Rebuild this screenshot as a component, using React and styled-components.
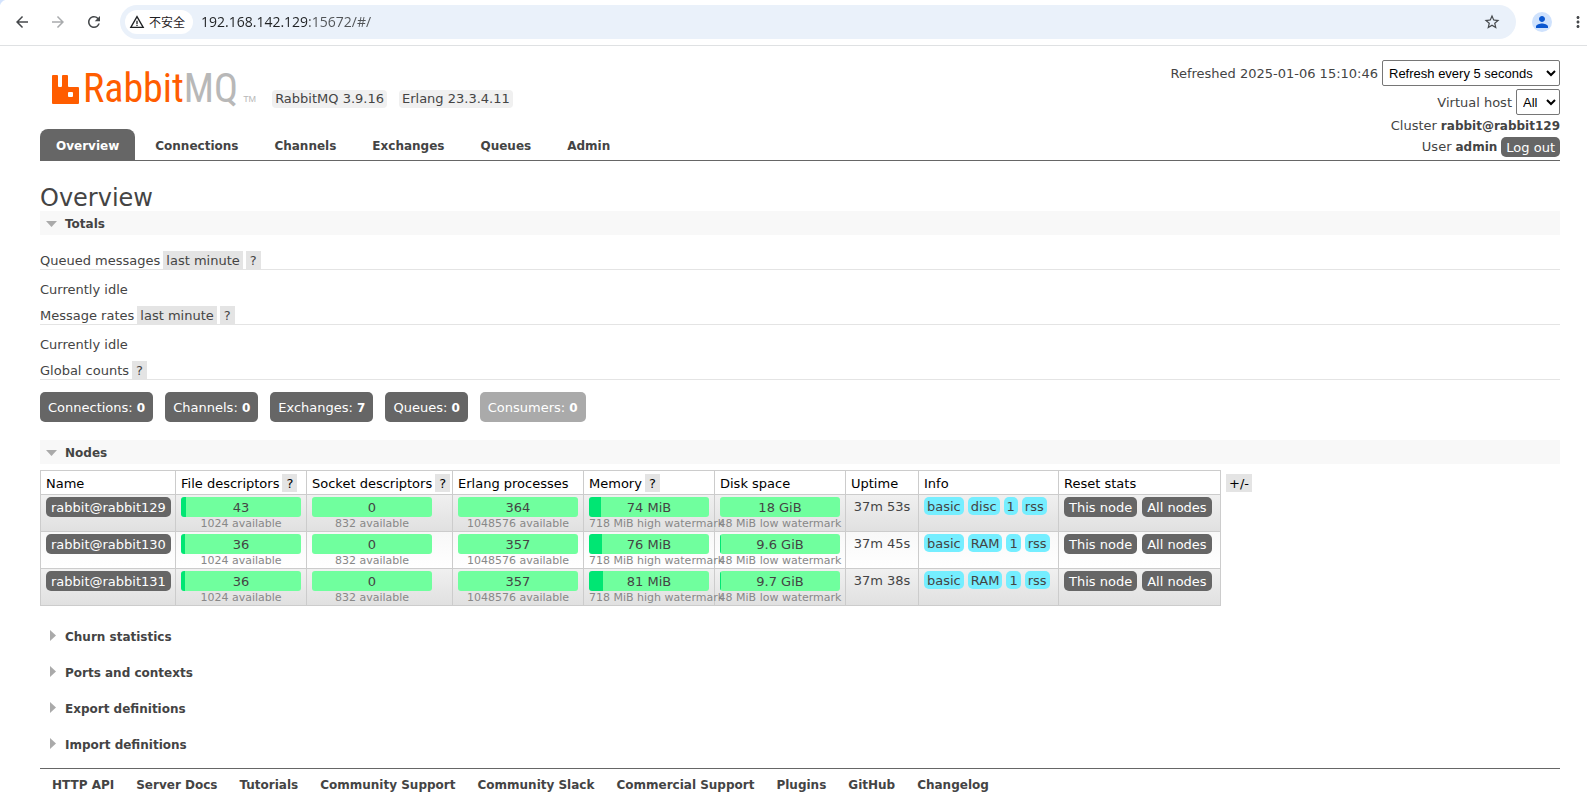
import styled, { createGlobalStyle, css } from 'styled-components'
import {
	MdArrowBack,
	MdArrowForward,
	MdRefresh,
	MdWarningAmber,
	MdStarBorder,
	MdPerson,
	MdMoreVert
} from 'react-icons/md'

const GlobalStyle = createGlobalStyle`
	* {
		box-sizing: border-box;
	}

	body {
		margin: 0;
		background: #fff;
		color: #444;
		font: 13px/16px Verdana, "DejaVu Sans", sans-serif;
	}

	button,
	a {
		font: inherit;
		color: inherit;
		text-decoration: none;
	}

	b {
		font-size: 12px;
	}

	button {
		border: 0;
		margin: 0;
		cursor: pointer;
	}
`

/* Browser toolbar */

const Toolbar = styled.div`
	display: flex;
	align-items: center;
	height: 46px;
	padding: 0 0 2px 12px;
	border-bottom: 1px solid #dfe1e3;
	background: radial-gradient(circle at 8px 8px, #fff 8px, #d3e3fd 9px) 0 0 /
		8px 8px no-repeat;
`

const ToolButton = styled.button`
	display: flex;
	justify-content: center;
	width: 20px;
	margin-right: 16px;
	padding: 0;
	background: none;
	color: ${({ $muted }) => ($muted ? '#a9abad' : '#45484b')};
	font-size: 18px;
`

const Omnibox = styled.div`
	flex: 1;
	display: flex;
	align-items: center;
	height: 34px;
	padding: 0 15px 0 5px;
	border-radius: 17px;
	background: #eaf1fa;
	color: #45484b;
`

const Security = styled.button`
	display: flex;
	align-items: center;
	gap: 4px;
	height: 24px;
	padding: 0 8px 0 4px;
	border-radius: 12px;
	background: #fff;
	color: #1f2123;
	font: 12px "Noto Sans CJK SC", sans-serif;
	white-space: nowrap;

	svg {
		font-size: 16px;
	}
`

/* the port and path are a shade lighter than the host */
const Address = styled.input`
	flex: 1;
	min-width: 0;
	margin-left: 8px;
	padding: 0;
	border: 0;
	outline: 0;
	color: transparent;
	background: linear-gradient(90deg, #1f2123 106px, #505356 106px);
	background-clip: text;
	font: 14px/20px "Open Sans", "Noto Sans", sans-serif;
`

const Star = styled(ToolButton)`
	width: 18px;
	margin: 0;
`

const Avatar = styled.button`
	display: flex;
	align-items: center;
	justify-content: center;
	width: 20px;
	height: 20px;
	margin: 0 17px 0 16px;
	padding: 0;
	border-radius: 50%;
	background: #cfe2fd;
	color: #0b57d0;
	font-size: 18px;
`

const More = styled(ToolButton)`
	width: 18px;
	margin: 0;
`

/* Page header */

const Header = styled.header`
	display: flex;
	justify-content: space-between;
	margin: 0 27px 0 40px;
	border-bottom: 1px solid #666;
`

const Brand = styled.div`
	display: flex;
	flex-direction: column;
	justify-content: space-between;
	padding-top: 24px;
`

const LogoRow = styled.div`
	display: flex;
	align-items: flex-end;
	gap: 12px;
	padding-left: 12px;
`

const Logo = styled.a`
	display: flex;
	align-items: flex-end;
	margin-right: 4px;
	color: #b8b8b8;
	font: 40px/38px "Liberation Sans Narrow", "Roboto Condensed", "Liberation Sans", sans-serif;

	svg {
		margin: 0 4px 4px 0;
	}

	small {
		margin-left: 5px;
		font: 9px/18px "Liberation Sans", sans-serif;
	}
`

const LogoAccent = styled.span`
	color: #ff5d00;
`

const Version = styled.span`
	padding: 1px 3px;
	border-radius: 4px;
	background: #f0f0f0;
`

const Menu = styled.nav`
	display: flex;
	gap: 4px;
`

const Tab = styled.a`
	padding: 9px 16px 6px;
	border-radius: 8px 8px 0 0;
	font-size: 12px;
	font-weight: bold;

	${({ $selected }) =>
		$selected &&
		css`
			background: #666;
			color: #fff;
		`}
`

const Login = styled.div`
	display: flex;
	flex-direction: column;
	align-items: flex-end;
	gap: 3px;
	padding: 14px 0 3px;
`

const LoginRow = styled.div`
	display: flex;
	align-items: center;
	gap: 4px;

	label {
		padding-top: 2px;
	}
`

const Select = styled.select`
	width: ${({ $width }) => $width}px;
	height: 26px;
	padding: 0 2px;
	border: 1px solid #767676;
	border-radius: 2px;
	background: #fff;
	color: #000;
	font: 13px "Liberation Sans", Arial, sans-serif;
`

const DarkButton = styled.button`
	height: 20px;
	padding: 2px 5px 0;
	border-radius: 5px;
	background: #666;
	color: #fff;
	line-height: 18px;
	white-space: nowrap;
`

/* Page body */

const Main = styled.main`
	margin: 0 27px 0 40px;
	padding-top: 24px;
`

const Title = styled.h1`
	margin: 0;
	font-size: 24px;
	font-weight: normal;
	line-height: 26px;
`

const SectionTitle = styled.h2`
	display: flex;
	align-items: center;
	gap: 8px;
	margin: 0 0 ${({ $open }) => ($open ? '0' : '12px')};
	padding: 2px 0 0 6px;
	background: ${({ $open }) => ($open ? '#f8f8f8' : 'none')};
	font-size: 12px;
	line-height: 22px;

	svg {
		width: 11px;
		height: 14px;
		fill: #aaa;
	}
`

const Totals = styled.div`
	padding: 16px 0 18px;
`

const Subtitle = styled.h3`
	display: flex;
	align-items: flex-end;
	gap: 3px;
	margin: 0;
	border-bottom: 1px solid #e4e4e4;
	font-size: 13px;
	font-weight: normal;
`

const Tag = styled.button`
	min-width: 15px;
	padding: 2px 3px 0;
	background: #e4e4e4;
`

const Idle = styled.p`
	margin: 0;
	padding: 12px 0 8px;
`

const Counts = styled.div`
	display: flex;
	gap: 12px;
	padding-top: 12px;
`

const Count = styled.a`
	padding: 8px 8px 6px;
	border-radius: 5px;
	background: ${({ $disabled }) => ($disabled ? '#aaa' : '#666')};
	color: #fff;
`

const NodesRow = styled.div`
	display: flex;
	align-items: flex-start;
	gap: 5px;
	padding: 6px 0 18px;

	> ${Tag} {
		margin-top: 4px;
		color: #000;
	}
`

const Table = styled.table`
	border-collapse: collapse;
	table-layout: fixed;
	width: 1181px;

	th,
	td {
		border: 1px solid #ccc;
		text-align: left;
		vertical-align: top;
		white-space: nowrap;
	}

	th {
		padding: 3px 5px 2px;
		color: #000;
		font-weight: normal;
	}

	td {
		padding: 2px 5px 1px;
	}

	tbody tr {
		background: linear-gradient(#f0f0f0, #e0e0e0);
	}

	tbody tr:nth-child(even) {
		background: linear-gradient(#f8f8f8, #fff);
	}
`

const Col = styled.col`
	width: ${({ $width }) => $width}px;
`

const HeadCell = styled.div`
	display: flex;
	align-items: flex-end;
	gap: 3px;
	min-height: 18px;
`

const Meter = styled.div`
	width: 120px;
	height: 20px;
	padding-top: 2px;
	border-radius: 3px;
	line-height: 18px;
	text-align: center;
	background-color: #70ff9e;
	background-image: linear-gradient(#00e673, #00e673);
	background-repeat: no-repeat;
`

const Limit = styled.div`
	display: flex;
	justify-content: ${({ $start }) => ($start ? 'flex-start' : 'center')};
	width: 120px;
	padding-top: 1px;
	color: #888;
	font-size: 11px;
	line-height: 12px;
`

const Uptime = styled.div`
	text-align: center;
	line-height: 20px;
`

const Group = styled.div`
	display: flex;
	gap: ${({ $gap }) => $gap}px;
`

const Info = styled.abbr`
	padding: 2px 3px 0;
	border-radius: 5px;
	background: #75eeff;
`

const Footer = styled.footer`
	display: flex;
	gap: 22px;
	margin: 0 27px 0 40px;
	padding: 8px 12px 16px;
	border-top: 1px solid #666;
	font-size: 12px;
	font-weight: bold;
`

const tabs = ['Overview', 'Connections', 'Channels', 'Exchanges', 'Queues', 'Admin']

const counts = [
	['Connections', 0],
	['Channels', 0],
	['Exchanges', 7],
	['Queues', 0],
	['Consumers', 0]
]

const columns = [
	{ title: 'Name', width: 135 },
	{ title: 'File descriptors', width: 131, help: true },
	{ title: 'Socket descriptors', width: 146, help: true },
	{ title: 'Erlang processes', width: 131 },
	{ title: 'Memory', width: 131, help: true },
	{ title: 'Disk space', width: 131 },
	{ title: 'Uptime', width: 73 },
	{ title: 'Info', width: 140 },
	{ title: 'Reset stats', width: 162 }
]

// fill is the width of the used part of the bar, in pixels
const meters = (fd, erlang, memory, memoryFill, disk, diskFill) => [
	{ value: fd, fill: fd > 40 ? 5 : 4, limit: '1024 available' },
	{ value: 0, fill: 0, limit: '832 available' },
	{ value: erlang, fill: 0, limit: '1048576 available' },
	{ value: memory, fill: memoryFill, limit: '718 MiB high watermark', start: true },
	{ value: disk, fill: diskFill, limit: '48 MiB low watermark' }
]

const nodes = [
	{
		name: 'rabbit@rabbit129',
		meters: meters(43, 364, '74 MiB', 12, '18 GiB', 0),
		uptime: '37m 53s',
		info: ['basic', 'disc', '1', 'rss']
	},
	{
		name: 'rabbit@rabbit130',
		meters: meters(36, 357, '76 MiB', 13, '9.6 GiB', 1),
		uptime: '37m 45s',
		info: ['basic', 'RAM', '1', 'rss']
	},
	{
		name: 'rabbit@rabbit131',
		meters: meters(36, 357, '81 MiB', 14, '9.7 GiB', 1),
		uptime: '37m 38s',
		info: ['basic', 'RAM', '1', 'rss']
	}
]

const closedSections = [
	'Churn statistics',
	'Ports and contexts',
	'Export definitions',
	'Import definitions'
]

const footerLinks = [
	'HTTP API',
	'Server Docs',
	'Tutorials',
	'Community Support',
	'Community Slack',
	'Commercial Support',
	'Plugins',
	'GitHub',
	'Changelog'
]

const Section = ({ open, children }) => (
	<SectionTitle $open={open}>
		<svg viewBox="0 0 11 14">
			<path d={open ? 'M0 4h11l-5.500 6z' : 'M4 0v11l6-5.500z'} />
		</svg>
		{children}
	</SectionTitle>
)

const Browser = () => (
	<Toolbar>
		<ToolButton aria-label="Back">
			<MdArrowBack />
		</ToolButton>
		<ToolButton aria-label="Forward" $muted>
			<MdArrowForward />
		</ToolButton>
		<ToolButton aria-label="Reload">
			<MdRefresh />
		</ToolButton>
		<Omnibox>
			<Security>
				<MdWarningAmber />
				不安全
			</Security>
			<Address
				aria-label="Address"
				defaultValue="192.168.142.129:15672/#/"
			/>
			<Star aria-label="Bookmark">
				<MdStarBorder />
			</Star>
		</Omnibox>
		<Avatar aria-label="Profile">
			<MdPerson />
		</Avatar>
		<More aria-label="Menu">
			<MdMoreVert />
		</More>
	</Toolbar>
)

const NodesTable = () => (
	<Table>
		<colgroup>
			{columns.map(({ title, width }) => (
				<Col key={title} $width={width} />
			))}
		</colgroup>
		<thead>
			<tr>
				{columns.map(({ title, help }) => (
					<th key={title}>
						<HeadCell>
							{title}
							{help && <Tag>?</Tag>}
						</HeadCell>
					</th>
				))}
			</tr>
		</thead>
		<tbody>
			{nodes.map(node => (
				<tr key={node.name}>
					<td>
						<DarkButton>{node.name}</DarkButton>
					</td>
					{node.meters.map(({ value, fill, limit, start }) => (
						<td key={limit}>
							<Meter style={{ backgroundSize: `${fill}px 100%` }}>
								{value}
							</Meter>
							<Limit $start={start}>{limit}</Limit>
						</td>
					))}
					<td>
						<Uptime>{node.uptime}</Uptime>
					</td>
					<td>
						<Group $gap={4}>
							{node.info.map(text => (
								<Info key={text}>{text}</Info>
							))}
						</Group>
					</td>
					<td>
						<Group $gap={5}>
							<DarkButton>This node</DarkButton>
							<DarkButton>All nodes</DarkButton>
						</Group>
					</td>
				</tr>
			))}
		</tbody>
	</Table>
)

export default () => (
	<>
		<GlobalStyle />
		<Browser />
		<Header>
			<Brand>
				<LogoRow>
					<Logo href="#/">
						<svg width="27" height="29" viewBox="0 0 27 29">
							<path
								fill="#ff5d00"
								fillRule="evenodd"
								d="M1 0h4q1 0 1 1v10q0 1 1 1h2q1 0 1-1V1q0-1 1-1h4q1 0 1 1v10q0 1 1 1h9q1 0 1 1v15q0 1-1 1H1q-1 0-1-1V1q0-1 1-1zM17 17q-1 0-1 1v3q0 1 1 1h3q1 0 1-1v-3q0-1-1-1z"
							/>
						</svg>
						<LogoAccent>Rabbit</LogoAccent>MQ<small>TM</small>
					</Logo>
					<Version>RabbitMQ 3.9.16</Version>
					<Version>Erlang 23.3.4.11</Version>
				</LogoRow>
				<Menu>
					{tabs.map(tab => (
						<Tab key={tab} href="#/" $selected={tab === 'Overview'}>
							{tab}
						</Tab>
					))}
				</Menu>
			</Brand>
			<Login>
				<LoginRow>
					<label htmlFor="refresh">Refreshed 2025-01-06 15:10:46</label>
					<Select id="refresh" $width={178}>
						<option>Refresh every 5 seconds</option>
					</Select>
				</LoginRow>
				<LoginRow>
					<label htmlFor="vhost">Virtual host</label>
					<Select id="vhost" $width={44}>
						<option>All</option>
					</Select>
				</LoginRow>
				<LoginRow>
					Cluster <b>rabbit@rabbit129</b>
				</LoginRow>
				<LoginRow>
					User <b>admin</b>
					<DarkButton>Log out</DarkButton>
				</LoginRow>
			</Login>
		</Header>
		<Main>
			<Title>Overview</Title>
			<Section open>Totals</Section>
			<Totals>
				<Subtitle>
					Queued messages <Tag>last minute</Tag>
					<Tag>?</Tag>
				</Subtitle>
				<Idle>Currently idle</Idle>
				<Subtitle>
					Message rates <Tag>last minute</Tag>
					<Tag>?</Tag>
				</Subtitle>
				<Idle>Currently idle</Idle>
				<Subtitle>
					Global counts <Tag>?</Tag>
				</Subtitle>
				<Counts>
					{counts.map(([name, value]) => (
						<Count
							key={name}
							href="#/"
							$disabled={name === 'Consumers'}
						>
							{name}: <b>{value}</b>
						</Count>
					))}
				</Counts>
			</Totals>
			<Section open>Nodes</Section>
			<NodesRow>
				<NodesTable />
				<Tag>+/-</Tag>
			</NodesRow>
			{closedSections.map(name => (
				<Section key={name}>{name}</Section>
			))}
		</Main>
		<Footer>
			{footerLinks.map(link => (
				<a key={link} href="#/">
					{link}
				</a>
			))}
		</Footer>
	</>
)
